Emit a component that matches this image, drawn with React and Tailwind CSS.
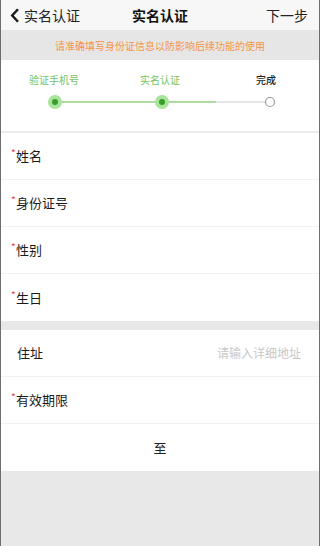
import React from 'react';

const FONT = { fontFamily: '"Noto Sans CJK SC", "Noto Sans", sans-serif' };

function Row({ label, required, right, last }) {
  return (
    <div className={`h-[47px] flex items-center justify-between pr-[18px] ${required ? 'pl-[10px]' : 'pl-[16px]'} ${last ? '' : 'border-b border-[#f1f1f1]'}`}>
      <div className="flex items-center text-[13px] text-[#1a1a1a]">
        {required && <span className="text-[#f23c2c] text-[10px] leading-none -mt-[6px] w-[5px]">*</span>}
        <span>{label}</span>
      </div>
      {right && <span className="text-[12px] text-[#c8c8c8]">{right}</span>}
    </div>
  );
}

export default function App() {
  return (
    <div className="w-[320px] h-[546px] border-x border-[#6e6e6e] bg-[#e8e8e8] flex flex-col overflow-hidden" style={FONT}>
      {/* Barra de topo */}
      <div className="h-[30px] bg-[#f7f7f7] flex items-center justify-between pl-[9px] pr-[11px] relative">
        <div className="flex items-center gap-[4px] text-[14px] text-[#222]">
          <svg width="10" height="15" viewBox="0 0 10 15">
            <path d="M8 1.2 L2.2 7.5 L8 13.8" fill="none" stroke="#1a1a1a" strokeWidth="2.4" />
          </svg>
          <span>实名认证</span>
        </div>
        <span className="absolute left-0 right-0 text-center text-[14px] font-semibold text-[#111] pointer-events-none">实名认证</span>
        <span className="text-[14px] text-[#222]">下一步</span>
      </div>

      {/* Aviso */}
      <div className="h-[30px] bg-[#e6e6e6] flex items-center justify-center text-[10px] text-[#f49545]">
        请准确填写身份证信息以防影响后续功能的使用
      </div>

      {/* Etapas */}
      <div className="bg-white pt-[13px] pb-[21px] border-b-2 border-[#ededed]">
        <div className="flex text-[10px] leading-[14px]">
          <span className="w-[107px] text-center text-[#74c464]">验证手机号</span>
          <span className="w-[107px] text-center text-[#74c464]">实名认证</span>
          <span className="w-[107px] text-center text-[#222] font-medium">完成</span>
        </div>
        <svg width="318" height="16" viewBox="0 0 318 16" className="mt-[7px] block">
          <line x1="54" y1="8" x2="215" y2="8" stroke="#8fd080" strokeWidth="1.5" />
          <line x1="215" y1="8" x2="265" y2="8" stroke="#dcdcdc" strokeWidth="1.5" />
          <circle cx="54" cy="8" r="7" fill="#a8e49a" />
          <circle cx="54" cy="8" r="3" fill="#3a9c2d" />
          <circle cx="161" cy="8" r="7" fill="#a8e49a" />
          <circle cx="161" cy="8" r="3" fill="#3a9c2d" />
          <circle cx="269" cy="8" r="4.5" fill="#fff" stroke="#9a9a9a" strokeWidth="1.2" />
        </svg>
      </div>

      {/* Dados pessoais */}
      <div className="bg-white">
        <Row label="姓名" required />
        <Row label="身份证号" required />
        <Row label="性别" required />
        <Row label="生日" required last />
      </div>

      <div className="h-[9px]" />

      <div className="bg-white">
        <Row label="住址" right="请输入详细地址" />
        <Row label="有效期限" required />
        <div className="h-[47px] flex items-center justify-center text-[13px] text-[#222]">至</div>
      </div>
    </div>
  );
}
